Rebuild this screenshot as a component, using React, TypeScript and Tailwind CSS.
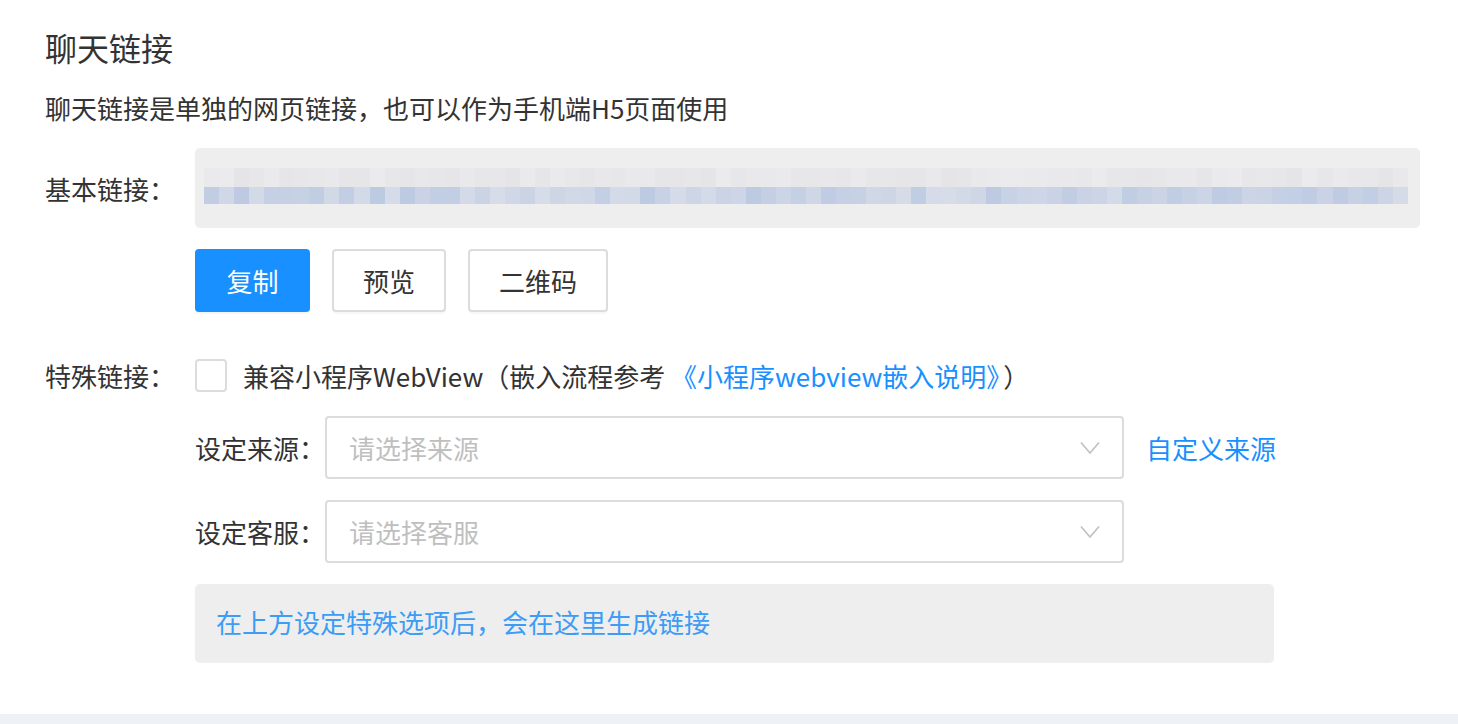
import React from "react";

// pseudo-random mosaic for the blurred link text
const seeded = (seed: number) => {
  let s = seed;
  return () => {
    s = (s * 9301 + 49297) % 233280;
    return s / 233280;
  };
};

const rand = seeded(17);
const CELLS = 80;

const topRow = Array.from({ length: CELLS }, () => {
  const v = Math.round(229 + rand() * 6);
  return `rgb(${v}, ${v}, ${Math.min(v + 3, 238)})`;
});

const bottomRow = Array.from({ length: CELLS }, () => {
  const t = rand();
  const r = Math.round(214 - t * 26);
  const g = Math.round(220 - t * 18);
  const b = Math.round(232 - t * 6);
  return `rgb(${r}, ${g}, ${b})`;
});

const Chevron: React.FC = () => (
  <svg width="20" height="14" viewBox="0 0 20 14" fill="none">
    <path d="M1 1.5 L10 12 L19 1.5" stroke="#c0c0c0" strokeWidth="1.6" />
  </svg>
);

const SelectBox: React.FC<{ placeholder: string }> = ({ placeholder }) => (
  <div className="flex h-[63px] w-[799px] items-center justify-between rounded-[4px] border-2 border-[#dcdcdc] bg-white pl-[22px] pr-[22px]">
    <span className="text-[#bfbfbf]">{placeholder}</span>
    <Chevron />
  </div>
);

const App: React.FC = () => {
  return (
    <div className="min-h-screen bg-[#eef1f5] font-['Noto_Sans_CJK_SC',sans-serif] text-[26px] text-[#333333]">
      <div className="h-[714px] bg-white pl-[45px] pr-[38px] pt-[26px]">
        <h2 className="text-[32px] leading-[42px] text-[#333333]">聊天链接</h2>
        <p className="mt-[22px] leading-[36px]">
          聊天链接是单独的网页链接，也可以作为手机端H5页面使用
        </p>

        {/* basic link */}
        <div className="mt-[22px] flex">
          <div className="flex h-[80px] w-[150px] shrink-0 items-center">基本链接：</div>
          <div className="flex flex-1 flex-col">
            <div className="h-[80px] rounded-[5px] bg-[#eeeeee] pl-[9px] pr-[12px] pt-[20px]">
              <div className="flex h-[19px]">
                {topRow.map((c, i) => (
                  <div key={i} className="flex-1" style={{ backgroundColor: c }} />
                ))}
              </div>
              <div className="flex h-[17px]">
                {bottomRow.map((c, i) => (
                  <div key={i} className="flex-1" style={{ backgroundColor: c }} />
                ))}
              </div>
            </div>
            <div className="mt-[21px] flex gap-[22px]">
              <button className="h-[63px] w-[115px] rounded-[4px] bg-[#1890ff] text-white shadow-[0_2px_0_rgba(0,0,0,0.04)]">
                复制
              </button>
              <button className="h-[63px] w-[114px] rounded-[4px] border-2 border-[#dcdcdc] bg-white shadow-[0_2px_0_rgba(0,0,0,0.03)]">
                预览
              </button>
              <button className="h-[63px] w-[140px] rounded-[4px] border-2 border-[#dcdcdc] bg-white shadow-[0_2px_0_rgba(0,0,0,0.03)]">
                二维码
              </button>
            </div>
          </div>
        </div>

        {/* special link */}
        <div className="mt-[47px] flex">
          <div className="flex h-[33px] w-[150px] shrink-0 items-center">特殊链接：</div>
          <div className="flex flex-col">
            <div className="flex h-[33px] items-center">
              <span className="h-[33px] w-[32px] rounded-[4px] border-2 border-[#dcdcdc] bg-white" />
              <span className="ml-[16px]">
                兼容小程序WebView（嵌入流程参考{" "}
                <span className="text-[#1890ff]">《小程序webview嵌入说明》</span>
                <span className="ml-[4px]">）</span>
              </span>
            </div>

            <div className="mt-[24px] flex items-center">
              <span className="w-[130px] shrink-0">设定来源：</span>
              <SelectBox placeholder="请选择来源" />
              <span className="ml-[22px] text-[#1890ff]">自定义来源</span>
            </div>

            <div className="mt-[21px] flex items-center">
              <span className="w-[130px] shrink-0">设定客服：</span>
              <SelectBox placeholder="请选择客服" />
            </div>

            <div className="mt-[21px] flex h-[79px] w-[1079px] items-center rounded-[5px] bg-[#eeeeee] px-[21px] pb-[4px] text-[#3c9cf6]">
              在上方设定特殊选项后，会在这里生成链接
            </div>
          </div>
        </div>
      </div>
    </div>
  );
};

export default App;
